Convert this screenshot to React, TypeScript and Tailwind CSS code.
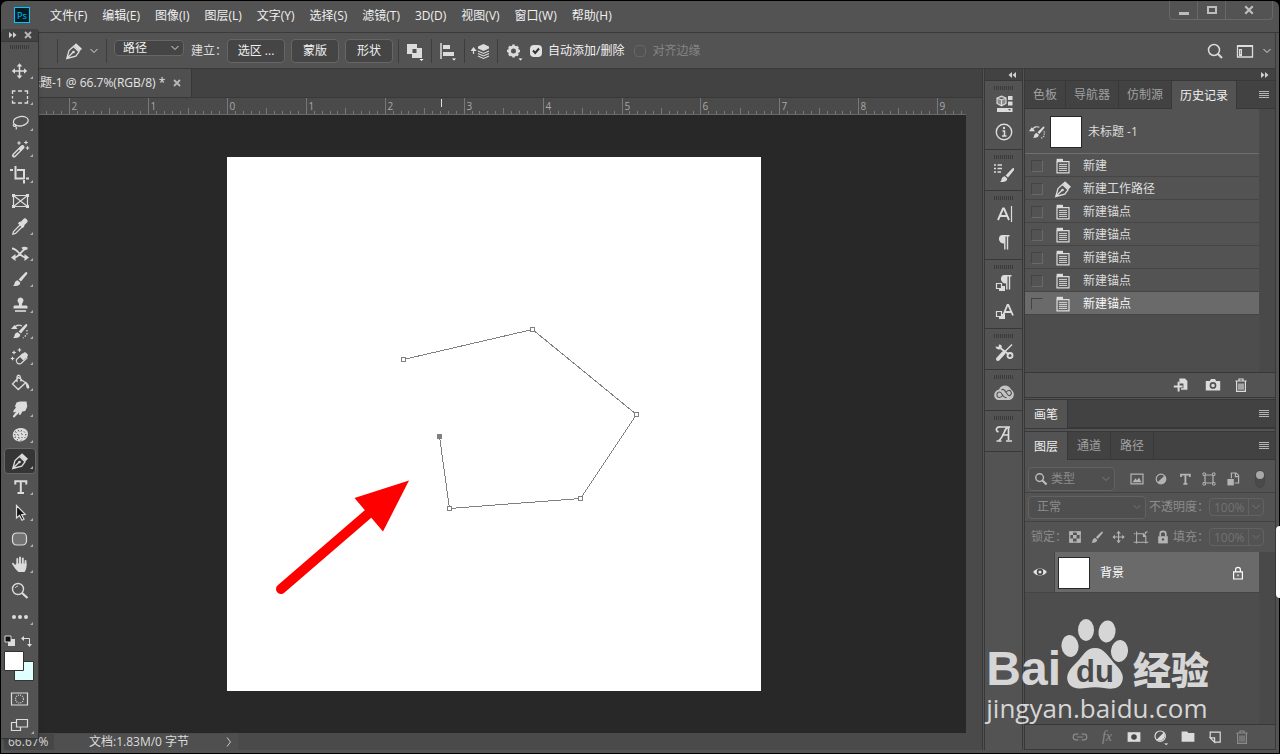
import React, { useState } from "react";
import { clsx } from "clsx";

const menus = [
  "文件(F)",
  "编辑(E)",
  "图像(I)",
  "图层(L)",
  "文字(Y)",
  "选择(S)",
  "滤镜(T)",
  "3D(D)",
  "视图(V)",
  "窗口(W)",
  "帮助(H)",
];

const historyList = [
  { id: 1, name: "新建", icon: "doc" },
  { id: 2, name: "新建工作路径", icon: "pen" },
  { id: 3, name: "新建锚点", icon: "doc" },
  { id: 4, name: "新建锚点", icon: "doc" },
  { id: 5, name: "新建锚点", icon: "doc" },
  { id: 6, name: "新建锚点", icon: "doc" },
  { id: 7, name: "新建锚点", icon: "doc" },
];

const anchors = [
  [176.5, 202.5],
  [305.5, 172.5],
  [409.5, 257.5],
  [353.5, 341.5],
  [222.5, 351.5],
  [212.5, 279.5],
];

type IconProps = { children: React.ReactNode; size?: string };

// 20x20 drawing box shared by all icons
function Icon({ children, size = "size-5" }: IconProps) {
  return (
    <svg
      className={clsx("shrink-0", size)}
      viewBox="0 0 20 20"
      fill="none"
      stroke="currentColor"
      strokeWidth={1.5}
      aria-hidden="true"
    >
      {children}
    </svg>
  );
}

const penShape = (
  <>
    <path d="M2.800 17.500 5 9.500 9.500 5.500l5.500 5.300-3.200 4.400-9 2.300zM3 17.300l6-6" strokeWidth={1.300} />
    <circle cx="9.500" cy="11" r="1.300" fill="currentColor" stroke="none" />
    <path d="M9.500 4.800 12 2.300l6 5.500L15.300 10.500z" fill="currentColor" stroke="none" />
  </>
);

const brushShape = (
  <g fill="currentColor" stroke="none">
    <path d="M16.800 3.200c.8.6.6 1.400.1 2L11 12.600 8.600 10.400 15.300 3.600c.4-.5.9-.8 1.500-.4z" />
    <path d="M7.700 11.200l2.500 2.300c.2 2.600-2.600 4.300-7.400 3.300 1.900-.8 1.400-2 2-3.400.6-1.300 1.700-2.100 2.900-2.200z" />
  </g>
);

const moveShape = (
  <>
    <path d="M9.500 4v12M3.500 10h12" />
    <path
      d="M9.500 2.300 12.300 5.500H6.700zM9.500 17.700l-2.800-3.200h5.600zM1.800 10 5 7.200v5.600zM17.200 10 14 7.200v5.600z"
      fill="currentColor"
      stroke="none"
    />
  </>
);

const sparkle = (x: number, y: number) => (
  <path d={`M${x} ${y - 1.8}v3.600M${x - 1.8} ${y}h3.600`} strokeWidth={1.2} />
);

const tools = [
  { name: "移动工具", art: moveShape },
  {
    name: "矩形选框工具",
    art: <path d="M2.500 7V4h3M8 4h4M14.500 4h3v3M17.500 9v3M17.500 13.500v2.500h-3M12 16H8M5.500 16h-3v-2.500M2.500 11.500V9" strokeWidth={1.3} />,
  },
  {
    name: "套索工具",
    art: (
      <>
        <ellipse cx="10.800" cy="8.200" rx="7.500" ry="4.700" transform="rotate(-10 10.800 8.200)" strokeWidth={1.3} />
        <path d="M3.800 11.200c-1.200 1.200 0 2.600 1.500 2.100 1.300-.6.4-2.200-1.200-1.800M5.600 13c.8 1 1.200 2.400.4 3.500" strokeWidth={1.2} />
      </>
    ),
  },
  {
    name: "魔棒工具",
    art: (
      <>
        <path d="M4 16.500 12.500 8" strokeWidth={4} strokeLinecap="round" />
        <path d="M4 16.500l5.500-5.500" stroke="#535353" strokeWidth={1.2} />
        {sparkle(9, 4)}
        {sparkle(16, 3.500)}
        {sparkle(17.500, 9)}
      </>
    ),
  },
  {
    name: "裁剪工具",
    art: <path d="M0 5h3M5.500 1v12.500h9M7 5h7v9M14 15v3.500M16 13.500h3" strokeWidth={2} />,
  },
  {
    name: "图框工具",
    art: (
      <>
        <path d="M3.500 4.500h14v11h-14zM3.500 4.500l14 11M17.500 4.500l-14 11" strokeWidth={1.200} />
        <path d="M2 3h3v3H2zM16 3h3v3h-3zM2 14h3v3H2zM16 14h3v3h-3z" fill="currentColor" stroke="none" />
      </>
    ),
  },
  {
    name: "吸管工具",
    art: (
      <>
        <path d="M10.500 7.500 3.500 14.500 2.800 17.200 5.500 16.500l7-7" strokeWidth={1.300} />
        <path d="M9 5l2-.5 3-3c1.500-1 4.500 2 3.500 3.600l-3 2.900-.5 2-1.500 1L8 6.500z" fill="currentColor" stroke="none" />
      </>
    ),
  },
  {
    name: "内容感知移动工具",
    art: (
      <>
        <path d="M2 5.500c6 0 8 9 14 9M17.500 5.500c-6 0-8 9-13 9M12 5.500c2-1.500 3-1 5.500 0" strokeWidth={1.800} />
        <path d="M1 14.500l4.500-3.500v7zM19 14.500 14.500 11v7z" fill="currentColor" stroke="none" />
      </>
    ),
  },
  { name: "画笔工具", art: brushShape },
  {
    name: "仿制图章工具",
    art: (
      <g fill="currentColor" stroke="none">
        <path d="M10.500 2.500a3 3 0 0 1 2.200 5c-.8 1-.7 1.700-.7 3h4c1 0 1.500.5 1.500 1.500v1.500h-14V12c0-1 .5-1.500 1.500-1.500h4c0-1.300.1-2-.7-3a3 3 0 0 1 2.200-5z" />
        <path d="M5 15.200h11v1.600H5z" />
      </g>
    ),
  },
  {
    name: "历史记录画笔工具",
    art: (
      <>
        {brushShape}
        <path d="M12 5C9 3.500 6 4 4.500 7" strokeWidth={1.200} />
        <path d="M1 8l3.500-4L7.500 8z" fill="currentColor" stroke="none" />
        <path d="M17 9v4.500l-4 3.500" strokeDasharray="1.500 1.500" strokeWidth={1.200} />
      </>
    ),
  },
  {
    name: "魔术橡皮擦工具",
    art: (
      <>
        <path d="M6.500 12.500 12.500 7l4.500 4-6 5.500c-3 1.500-5.500-1.500-4.500-4z" strokeWidth={1.200} />
        <path d="M9.500 9.500 14 5.500c1.500-.8 4.500 2 3.800 3.500l-4.500 4.500z" fill="currentColor" stroke="none" />
        {sparkle(4, 5.500)}
        {sparkle(9.500, 3)}
        {sparkle(2.500, 11.500)}
      </>
    ),
  },
  {
    name: "油漆桶工具",
    art: (
      <>
        <path d="M8.500 4.500 2.500 11l5.800 5.500L15.500 9.700zM7 9V4.500c0-3 3-3 3.500 0l.5 4" strokeWidth={1.300} />
        <path d="M15 8.500c2.500.5 4.500 4.500 4.300 6-.3 1.500-2.300 1.500-2.700 0z" fill="currentColor" stroke="none" />
      </>
    ),
  },
  {
    name: "涂抹工具",
    art: (
      <path
        d="M6.500 3.500 10 2.500h6.500l.8 5-2 4.500-3 .6-1.500 3-2 .4.500-2.500-5 5c-1.300.2-1.800-1-1-2l3-4-2.300 1c-1-.5-.8-1.800 0-2.500L6 8.500c-1.300-.8-1-1.700-.5-2.500z"
        fill="currentColor"
        stroke="none"
      />
    ),
  },
  {
    name: "海绵工具",
    art: (
      <>
        <path d="M6 4.200c5-2.500 10-1 11.500 2.300 1.500 4-1 8-4 9-4 2-8.500.5-10-2.500-1.500-3.500-.5-7 2.500-8.800z" fill="currentColor" stroke="none" />
        <path
          d="M5 6.500l1.500 1M8 5l1 1.500M11.500 5l-.5 1.500M14 6.500l1 1M4 9.500l1.500.5M7.500 9l1 1.500M11 8.500l1.500 1M15 10l1.500-.5M4.500 12.500l1.500-.5M8 12.500l1.500.5M11.500 12l1 1M14.500 13l.8-1M7 15l1-.5M10.500 15.500l1-.5"
          stroke="#535353"
          strokeWidth={1}
        />
      </>
    ),
  },
  { name: "钢笔工具", art: penShape },
  {
    name: "横排文字工具",
    art: <path d="M5.300 7.500V4.300h11v3.200M10.800 4v12M7.500 16h6.500" strokeWidth={2} />,
  },
  {
    name: "路径选择工具",
    art: <path d="M6.500 2.500v12.500l3-2.500 2.500 4.700 2-1-2.400-4.400 3.600-.5z" fill="#151515" strokeWidth={1.200} />,
  },
  {
    name: "圆角矩形工具",
    art: <rect x="2.500" y="4" width="14" height="12" rx="4" fill="#737373" strokeWidth={1.200} />,
  },
  {
    name: "抓手工具",
    art: (
      <>
        <path d="M7.300 10V4M10 9V2.500M12.800 9V3.500M15.500 10V6M6 13 3 8.800" strokeWidth={1.900} strokeLinecap="round" />
        <path d="M6.300 8.500h10.200c.2 4-.3 6-2 8.500H8.500c-1.500-1-3-3.300-4.300-5.500z" fill="currentColor" stroke="none" />
      </>
    ),
  },
  {
    name: "缩放工具",
    art: (
      <>
        <circle cx="8" cy="8" r="5.500" strokeWidth={1.400} />
        <path d="M5.300 7c.5-1.200 1.500-1.800 2.700-1.800" strokeWidth={1} />
        <path d="M12 12l5.500 5" strokeWidth={2.300} />
      </>
    ),
  },
  {
    name: "编辑工具栏",
    art: (
      <g fill="currentColor" stroke="none">
        <circle cx="4" cy="10" r="2" />
        <circle cx="10" cy="10" r="2" />
        <circle cx="16" cy="10" r="2" />
      </g>
    ),
  },
];

const pilcrow = (
  <>
    <path d="M8.500 3h7v1.400h-1.300V17.500h-1.400V4.400h-1.300V17.500h-1.400v-6c-6.600 0-6.600-8.500-1.600-8.500z" fill="currentColor" stroke="none" />
  </>
);

const twoSquares = (
  <>
    <path d="M5 13h6v5H5z" fill="currentColor" stroke="none" />
    <path d="M2.500 10.500h5v5h-5z" fill="#535353" strokeWidth={1.200} />
  </>
);

const dockGroups = [
  [
    {
      name: "属性库",
      art: (
        <>
          <path d="M7.500 2 12 4v5.500l-4.500 2.300L3 9.500V4zM3 4l4.500 2L12 4M7.500 6v5.800" strokeWidth={1.100} fill="#8a8a8a" />
          <path d="M14 2h4.500v4H14zM14 7.500h4.500v4H14zM3 14h15.500v4H3z" fill="currentColor" stroke="none" />
          <path d="M14 15h3l-1.500 1.700z" fill="#535353" stroke="none" />
        </>
      ),
    },
    {
      name: "信息",
      art: (
        <>
          <circle cx="10" cy="10" r="7.700" strokeWidth={1.400} />
          <path d="M8.500 9h2v5M8 14h4.500" strokeWidth={1.500} />
          <circle cx="10" cy="6" r="1.200" fill="currentColor" stroke="none" />
        </>
      ),
    },
  ],
  [
    {
      name: "画笔设置",
      art: (
        <>
          <path d="M0 2h2M0 5.500h2M0 9h2M3.500 2H8M3.500 5.500H8M3.500 9H7" strokeWidth={1.600} />
          <g transform="translate(3 2)">{brushShape}</g>
        </>
      ),
    },
  ],
  [
    {
      name: "字符",
      art: (
        <>
          <path d="M4 16 9 4.500h1L15 16M5.500 12h8" strokeWidth={1.900} />
          <path d="M17.500 2v16" strokeWidth={1.200} />
        </>
      ),
    },
    { name: "段落", art: pilcrow },
  ],
  [
    {
      name: "段落样式",
      art: (
        <>
          <g transform="translate(2 -1)">{pilcrow}</g>
          {twoSquares}
        </>
      ),
    },
    {
      name: "字符样式",
      art: (
        <>
          <path d="M9 14.500 13.500 4h.8L19 14.500M10.500 11h7" strokeWidth={1.800} />
          {twoSquares}
        </>
      ),
    },
  ],
  [
    {
      name: "工具预设",
      art: (
        <>
          <path d="M5.500 5.500l9.500 7" strokeWidth={1.800} />
          <circle cx="16" cy="13.500" r="2.500" strokeWidth={1.800} />
          <path d="M1.500 4.500l3 .5L5 2.500C8 2.500 8.500 5 7 6.500 5.500 8.500 2 7.500 1.500 4.500z" fill="currentColor" stroke="none" />
          <path d="M18 2.500 9.500 11" strokeWidth={1.500} />
          <path d="M9.500 11 4 17" strokeWidth={4} strokeLinecap="round" />
        </>
      ),
    },
  ],
  [
    {
      name: "库",
      art: (
        <>
          <path
            d="M5 6.500C7 1 15 1 17 6.500c4.500 2.500 3.500 9.500-1.500 10.500H5.500C-1.500 17-1.500 8 5 6.500z"
            fill="#c4c4c4"
            stroke="none"
          />
          <path d="M12.500 14.500c-4 1-4-5.500-7-5.500s-3.800 5.500 0 5.500c1.800 0 2.500-1 3.500-2.500M7.500 7c3-3.500 6 7.500 8.500 5.500 3-2 .5-5.500-1.500-5-1.500.3-2 1-2.500 2" stroke="#535353" strokeWidth={1.100} />
        </>
      ),
    },
  ],
  [
    {
      name: "字形",
      art: (
        <>
          <path d="M4.500 8C.5 6 2.500 2.500 7 3h9M14.500 3v13M13.500 3C10 6 9.500 13 5 16.500M8 11h6.500" strokeWidth={1.700} />
          <path d="M2.500 17h5M12 17h6" strokeWidth={1.500} />
        </>
      ),
    },
  ],
];

function Grip() {
  return (
    <svg className="h-1 w-5" viewBox="0 0 20 4" stroke="#3a3a3a" strokeWidth={1} aria-hidden="true">
      <path d="M.5 0v4M2.500 0v4M4.500 0v4M6.500 0v4M8.500 0v4M10.500 0v4M12.500 0v4M14.500 0v4M16.500 0v4M18.500 0v4" />
    </svg>
  );
}

function Chevron() {
  return (
    <svg className="size-2 shrink-0" viewBox="0 0 8 8" fill="none" stroke="currentColor" aria-hidden="true">
      <path d="M.5 2 4 5.500 7.500 2" strokeWidth={1} />
    </svg>
  );
}

function DoubleArrow({ left = false }: { left?: boolean }) {
  return (
    <svg className="h-2 w-2" viewBox="0 0 8 8" fill="#d0d0d0" aria-hidden="true">
      <path d={left ? "M4 1v6L.5 4zM8 1v6L4.500 4z" : "M0 1v6L3.500 4zM4 1v6L7.500 4z"} />
    </svg>
  );
}

function Cross({ size = "size-2" }: { size?: string }) {
  return (
    <svg className={size} viewBox="0 0 8 8" stroke="currentColor" strokeWidth={1.800} aria-hidden="true">
      <path d="M1 1l6 6M7 1 1 7" />
    </svg>
  );
}

function MenuLines() {
  return (
    <button aria-label="面板菜单" className="ml-auto mr-1.5 text-[#b4b4b4]">
      <svg className="h-2 w-2.5" viewBox="0 0 10 8" stroke="currentColor" aria-hidden="true">
        <path d="M0 .5h10M0 2.500h10M0 4.500h10M0 6.500h10" />
      </svg>
    </button>
  );
}

function Divider() {
  return <span className="h-6 w-px shrink-0 bg-[#3d3d3d]" />;
}

type SelectBoxProps = {
  label: string;
  value: string;
  className?: string;
  selectClass?: string;
};

function SelectBox({ label, value, className, selectClass }: SelectBoxProps) {
  return (
    <label className={clsx("relative flex items-center rounded-sm border", className)}>
      <select
        aria-label={label}
        className={clsx("h-full w-full appearance-none bg-transparent outline-none", selectClass)}
      >
        <option>{value}</option>
      </select>
      <span className="pointer-events-none absolute right-1">
        <Chevron />
      </span>
    </label>
  );
}

function PercentBox({ label }: { label: string }) {
  const [value, setValue] = useState("100%");

  return (
    <label className="ml-auto mr-[11px] flex items-center">
      <span className="whitespace-nowrap text-[#8c8c8c]">{label}：</span>
      <span className="flex h-[18px] items-center rounded-sm border border-[#626262]">
        <input
          className="h-full w-[38px] bg-transparent pl-1 text-[#727272] outline-none"
          value={value}
          onChange={(e) => setValue(e.target.value)}
        />
        <span className="flex h-full w-[15px] items-center justify-center border-l border-[#626262] text-[#727272]">
          <Chevron />
        </span>
      </span>
    </label>
  );
}

type TabsProps = { items: string[]; active: string; wide?: boolean };

function PanelTabs({ items, active, wide = false }: TabsProps) {
  return (
    <div className="flex h-7 shrink-0 items-stretch bg-[#424242]">
      {items.map((item) => (
        <button
          key={item}
          className={clsx(
            "border-r border-[#383838] pt-px",
            wide ? "px-[9px]" : "px-2",
            item === active
              ? "bg-[#535353] text-[#f0f0f0]"
              : "border-b text-[#a0a0a0]",
          )}
        >
          {item}
        </button>
      ))}
      <div className="flex flex-1 items-center border-b border-[#383838]">
        <MenuLines />
      </div>
    </div>
  );
}

function MenuBar() {
  return (
    <header className="flex h-8 shrink-0 items-start border-b border-[#3a3a3a] pl-[13px]">
      <svg className="mt-1.5 h-4 w-4" viewBox="0 0 16 16" aria-hidden="true">
        <rect x=".5" y=".5" width="15" height="15" fill="#001d26" stroke="#00c8ff" />
        <text x="3" y="11.500" fontSize="9" fill="#00c8ff" fontFamily="Open Sans, sans-serif">
          Ps
        </text>
      </svg>
      <nav className="ml-5 mt-[7px] flex gap-[15px] text-xs leading-4 text-[#f0f0f0]">
        {menus.map((menu) => (
          <button key={menu} className="whitespace-nowrap">
            {menu}
          </button>
        ))}
      </nav>
      <div className="ml-auto mr-1.5 flex h-[19px] rounded-b-sm border border-t-0 border-[#686868] text-[#bdbdbd]">
        <button aria-label="最小化" className="flex w-7 items-center justify-center border-r border-[#686868]">
          <span className="mt-1.5 h-[3px] w-2.5 bg-[#bdbdbd]" />
        </button>
        <button aria-label="最大化" className="flex w-7 items-center justify-center border-r border-[#686868]">
          <span className="h-2 w-2.5 border-2 border-[#bdbdbd]" />
        </button>
        <button aria-label="关闭" className="flex w-[46px] items-center justify-center">
          <Cross size="size-2.5" />
        </button>
      </div>
    </header>
  );
}

function OptionsBar() {
  const [autoAdd, setAutoAdd] = useState(true);

  return (
    <div className="mx-[3px] flex h-9 shrink-0 items-center border-b border-r border-[#3a3a3a] pl-[53px] text-xs text-[#dcdcdc]">
      <Divider />
      <button aria-label="工具预设选取器" className="ml-1.5 flex items-center gap-1.5">
        <Icon>{penShape}</Icon>
        <Chevron />
      </button>
      <span className="w-2" />
      <Divider />
      <SelectBox
        label="工具模式"
        value="路径"
        className="mx-[7px] -mt-1.5 h-4 w-[70px] border-[#666] bg-[#454545]"
        selectClass="pl-2 leading-3 text-[#f0f0f0]"
      />
      <span className="-ml-1 mr-1">
        <Divider />
      </span>
      <span className="w-9 whitespace-nowrap">建立：</span>
      <div className="flex gap-1.5">
        <button className="h-6 w-[58px] rounded-sm border border-[#666] bg-[#454545] text-[#f0f0f0]">
          选区 ...
        </button>
        <button className="h-6 w-12 rounded-sm border border-[#666] bg-[#454545] text-[#f0f0f0]">蒙版</button>
        <button className="h-6 w-12 rounded-sm border border-[#666] bg-[#454545] text-[#f0f0f0]">形状</button>
      </div>
      <span className="w-[5px]" />
      <Divider />
      <button aria-label="路径操作" className="px-1.5">
        <Icon>
          <path d="M2 3h10v4h5v10H7v-4H2z" fill="currentColor" stroke="none" />
          <path d="M7.500 8h4v4h-4z" fill="#535353" stroke="none" />
          <path d="M14.500 18h4l-2 2z" fill="#fff" stroke="none" />
        </Icon>
      </button>
      <Divider />
      <button aria-label="路径对齐方式" className="px-1.5">
        <Icon>
          <path d="M3 2v16" />
          <path d="M5 4h7v4H5zM5 11h11v4H5z" fill="currentColor" stroke="none" />
          <path d="M14 17.500h4l-2 2z" fill="#fff" stroke="none" />
        </Icon>
      </button>
      <Divider />
      <button aria-label="路径排列方式" className="px-1.5">
        <Icon>
          <path d="M2.500 13V8M.5 9.500l2-2.500 2 2.500z" strokeWidth={1.200} fill="currentColor" />
          <path d="M7 5.500 12.500 3 18 5.500v2L12.500 10 7 7.500z" fill="currentColor" stroke="none" />
          <path d="M7 10l5.500 2.500L18 10M7 12.500l5.500 2.500 5.500-2.500M7 15l5.500 2.500L18 15" strokeWidth={1.100} />
        </Icon>
      </button>
      <Divider />
      <button aria-label="设置" className="px-1.5">
        <Icon>
          <circle cx="9.500" cy="10" r="4" strokeWidth={3} />
          <path d="M9.500 3.500v2M9.500 14.500v2M3 10h2M14 10h2M5 5.500l1.400 1.400M14 5.500l-1.400 1.400M5 14.500l1.400-1.400M14 14.500l-1.400-1.400" strokeWidth={2.500} />
          <path d="M14.500 17.500h4l-2 2z" fill="#fff" stroke="none" />
        </Icon>
      </button>
      <label className="flex items-center gap-1.5 whitespace-nowrap text-[#f0f0f0]">
        <span className="relative flex">
          <input
            type="checkbox"
            checked={autoAdd}
            onChange={(e) => setAutoAdd(e.target.checked)}
            className="size-3 appearance-none rounded-sm bg-[#e0e0e0]"
          />
          {autoAdd && (
            <svg className="pointer-events-none absolute inset-0 size-3" viewBox="0 0 12 12" fill="none" stroke="#333" strokeWidth={2} aria-hidden="true">
              <path d="M3 5.500 5.200 8 9 3.500" />
            </svg>
          )}
        </span>
        自动添加/删除
      </label>
      <label className="ml-2.5 flex items-center gap-1.5 whitespace-nowrap text-[#858585]">
        <input
          type="checkbox"
          disabled
          className="size-3 appearance-none rounded-sm border border-[#666]"
        />
        对齐边缘
      </label>
      <div className="ml-auto mr-1 flex items-center gap-2.5">
        <button aria-label="搜索">
          <Icon>
            <circle cx="9" cy="9" r="5.500" />
            <path d="M13 13l4 4" strokeWidth={2} />
          </Icon>
        </button>
        <button aria-label="选择工作区" className="flex items-center gap-2">
          <Icon>
            <path d="M2.500 5h15v11h-15z" strokeWidth={1.300} />
            <path d="M2 4h16v2H2zM4 8h3v7H4z" fill="currentColor" stroke="none" />
            <path d="M5 10h1M5 12h1" stroke="#535353" strokeWidth={1} />
          </Icon>
          <Chevron />
        </button>
      </div>
    </div>
  );
}

// Ticks are counted from the left edge of the page, which sits in the middle of the view
function Ruler() {
  const ticks = Array.from({ length: 120 }, (_, i) => i - 26);
  const step = 7.89;

  return (
    <svg className="block h-[17px] w-full border-b border-[#686868]" stroke="#777" aria-hidden="true">
      <svg x="50%" className="overflow-visible">
        {ticks.map((i) => {
          const x = Math.round(i * step) - 266.5;
          const top = i % 10 === 0 ? 0 : i % 5 === 0 ? 10 : 13;
          return (
            <g key={i}>
              <path d={`M${x} ${top}V16`} />
              {i % 10 === 0 && (
                <text x={x + 2} y={12} fontSize={10} fill="#a8a8a8" stroke="none">
                  {Math.abs(i / 10)}
                </text>
              )}
            </g>
          );
        })}
        <path d="M-52.500 1v8" stroke="#e0e0e0" />
      </svg>
    </svg>
  );
}

function DocumentArea() {
  return (
    <main className="flex min-w-0 flex-1 flex-col border-r border-[#383838]">
      <div className="flex h-[29px] shrink-0 border-b border-[#383838] bg-[#424242] text-xs">
        <div className="flex items-center gap-2 whitespace-nowrap border-r border-[#383838] bg-[#4f4f4f] pl-3 pr-2.5 text-[#e4e4e4]">
          未标题-1 @ 66.7%(RGB/8) *
          <button aria-label="关闭文档" className="text-[#b8b8b8]">
            <Cross />
          </button>
        </div>
      </div>
      <div className="flex min-h-0 flex-1">
        <div className="w-[18px] shrink-0 bg-[#4a4a4a]" />
        <div className="flex min-w-0 flex-1 flex-col overflow-hidden bg-[#4a4a4a]">
          <Ruler />
          <div className="flex min-h-0 flex-1 items-center justify-center overflow-hidden bg-[#282828]">
            <svg className="size-[534px] shrink-0 bg-white" viewBox="0 0 534 534" fill="none">
              <polyline
                points={anchors.map((p) => p.join(",")).join(" ")}
                stroke="#808080"
                shapeRendering="crispEdges"
              />
              {anchors.map(([x, y], i) => (
                <rect
                  key={i}
                  x={x - 2}
                  y={y - 2}
                  width={4}
                  height={4}
                  fill={i === anchors.length - 1 ? "#808080" : "#fff"}
                  stroke="#808080"
                />
              ))}
              <path d="M54 432 141 357" stroke="#f00" strokeWidth={10} strokeLinecap="round" />
              <path d="M182 323.500 127.500 341 156 374.500z" fill="#f00" />
            </svg>
          </div>
        </div>
        <div className="w-4 shrink-0 bg-[#4a4a4a]" />
      </div>
      <footer className="flex h-[17px] shrink-0 items-center bg-[#4a4a4a] text-xs leading-4 text-[#dcdcdc]">
        <input
          aria-label="缩放比例"
          defaultValue="66.67%"
          className="h-4 w-[50px] bg-[#464646] pl-1 text-xs outline-none"
        />
        <span className="w-[172px] bg-[#4f4f4f] pl-[35px]">文档:1.83M/0 字节</span>
        <button aria-label="状态栏选项" className="flex h-full w-3 items-center bg-[#4f4f4f]">
          <svg className="h-2.5 w-1.5" viewBox="0 0 6 10" fill="none" stroke="#ccc" aria-hidden="true">
            <path d="M1 .5 4.500 5 1 9.500" />
          </svg>
        </button>
      </footer>
    </main>
  );
}

function Toolbox() {
  return (
    <aside className="absolute left-px top-[29px] flex w-[38px] flex-col items-center rounded-t border-r border-b border-[#333] bg-[#535353] text-[#dcdcdc] shadow-md">
      <div className="flex h-[13px] w-full items-center justify-between rounded-t border-b border-[#383838] bg-[#424242] px-2">
        <DoubleArrow />
        <button aria-label="关闭工具栏" className="-mr-0.5 text-[#b8b8b8]">
          <Cross />
        </button>
      </div>
      <div className="flex h-4 items-start pt-[3px]">
        <Grip />
      </div>
      {tools.map((tool) => (
        <button
          key={tool.name}
          aria-label={tool.name}
          className={clsx(
            "relative flex h-[26px] w-8 items-center justify-center rounded-sm border",
            tool.name === "钢笔工具" ? "border-[#666] bg-[#353535]" : "border-transparent",
          )}
        >
          <Icon>{tool.art}</Icon>
          {tool.name !== "图框工具" && tool.name !== "缩放工具" ? (
            <svg className="absolute bottom-1 right-0.5 size-[3px]" viewBox="0 0 3 3" fill="#b0b0b0" aria-hidden="true">
              <path d="M3 0v3H0z" />
            </svg>
          ) : null}
        </button>
      ))}
      <div className="flex h-[21px] w-full items-center justify-between px-[3px] pt-px">
        <svg className="size-3" viewBox="0 0 12 12" aria-hidden="true">
          <path d="M4 4h7v7H4z" fill="#dcdcdc" />
          <path d="M1 1h6v6H1z" fill="#111" stroke="#dcdcdc" />
        </svg>
        <svg className="mr-0.5 size-3" viewBox="0 0 12 12" fill="none" stroke="#dcdcdc" aria-hidden="true">
          <path d="M3 3.500h5.500V9" />
          <path d="M0 3.500 3 1v5zM8.500 12 6 9h5z" fill="#dcdcdc" stroke="none" />
        </svg>
      </div>
      {/* Foreground / background colors */}
      <svg className="ml-[3px] h-[30px] w-[30px] self-start" viewBox="0 0 30 30" stroke="#333" aria-hidden="true">
        <path d="M10.500 10.500h19v19h-19z" fill="#e0ffff" />
        <path d="M.5.500h19v19H.5z" fill="#fff" />
      </svg>
      <button aria-label="以快速蒙版模式编辑" className="mt-1 flex h-[27px] items-center">
        <Icon>
          <path d="M1.500 4h16v12h-16z" strokeWidth={1.200} />
          <circle cx="9.500" cy="10" r="4" strokeDasharray="1 1.100" strokeWidth={1.200} />
        </Icon>
      </button>
      <button aria-label="更改屏幕模式" className="relative flex h-[26px] w-8 items-center justify-center">
        <Icon>
          <path d="M1.500 7.500h9v8h-9z" strokeWidth={1.200} />
          <path d="M6.500 4.500h11v7.500h-11z" fill="#535353" strokeWidth={1.200} />
        </Icon>
        <svg className="absolute bottom-1 right-0.5 size-[3px]" viewBox="0 0 3 3" fill="#b0b0b0" aria-hidden="true">
          <path d="M3 0v3H0z" />
        </svg>
      </button>
    </aside>
  );
}

function Dock() {
  return (
    <aside className="mx-px flex w-[39px] shrink-0 flex-col border-x border-[#383838] text-[#dcdcdc]">
      <div className="flex h-3 shrink-0 items-center justify-end border-b border-[#383838] bg-[#424242] pr-1.5">
        <DoubleArrow left />
      </div>
      {dockGroups.map((group, i) => (
        <div key={i} className="flex flex-col items-center border-b border-[#383838] pb-[3px]">
          <div className="flex h-[9px] items-end">
            <Grip />
          </div>
          {group.map((item) => (
            <button key={item.name} aria-label={item.name} className="flex h-7 items-center">
              <Icon>{item.art}</Icon>
            </button>
          ))}
        </div>
      ))}
    </aside>
  );
}

function DocIcon() {
  return (
    <Icon size="size-4">
      <path d="M2 1h8v3H2z" fill="currentColor" stroke="none" />
      <path d="M2.500 4.500h15v14h-15z" strokeWidth={1.500} />
      <path d="M5 8h10M5 10.500h10M5 13h10M5 15.500h10" strokeWidth={1.200} />
    </Icon>
  );
}

const trashShape = (
  <path d="M3 5h14M7.500 4.500V2.500h5v2M4.500 5.500V18h11V5.500M7.500 8v8M10 8v8M12.500 8v8" strokeWidth={1.500} />
);

function HistoryPanel() {
  const [current, setCurrent] = useState(7);

  return (
    <section className="flex flex-col border-b border-[#383838]">
      <PanelTabs items={["色板", "导航器", "仿制源", "历史记录"]} active="历史记录" />
      <div className="flex h-[264px] border-b border-[#383838] bg-[#4d4d4d]">
        <div className="flex-1">
          <div className="flex h-[45px] items-center border-b border-[#6e6e6e] bg-[#535353] pl-1 pt-0.5 text-[#dcdcdc]">
            <Icon size="size-4">
              <g transform="translate(2 0)">{brushShape}</g>
              <path d="M13 4C9 2.500 5 4 4 8" />
              <path d="M0 9l3.500-5 4 5z" fill="currentColor" stroke="none" />
              <path d="M19 9v6l-4 3" strokeDasharray="1.500 1.500" />
            </Icon>
            <span className="ml-[5px] size-8 border border-[#282828] bg-white" />
            <span className="ml-1.5">未标题 -1</span>
          </div>
          {historyList.map((state) => (
            <button
              key={state.id}
              onClick={() => setCurrent(state.id)}
              className={clsx(
                "flex h-[23px] w-full items-center border-b border-[#454545] pl-1.5 pt-0.5",
                state.id === current ? "bg-[#6a6a6a] text-[#f8f8f8]" : "bg-[#535353] text-[#dcdcdc]",
              )}
            >
              <span className="size-3 border border-[#444] border-b-[#696969] border-r-[#696969]" />
              <span className="ml-2.5 mr-2.5 flex w-5 justify-center text-[#dcdcdc]">
                {state.icon === "pen" ? <Icon>{penShape}</Icon> : <DocIcon />}
              </span>
              {state.name}
            </button>
          ))}
        </div>
        <div className="w-4 bg-[#494949]" />
      </div>
      <div className="flex h-6 items-center justify-end gap-4 pr-[26px] text-[#dcdcdc]">
        <button aria-label="从当前状态创建新文档">
          <Icon size="size-4">
            <path d="M8 2h7l3 3v11h-8v-2h3V8H8z" fill="currentColor" stroke="none" />
            <path d="M7 6v12M1 12h11" strokeWidth={2.500} />
          </Icon>
        </button>
        <button aria-label="创建新快照">
          <Icon size="size-4">
            <path d="M1 5h5l1.500-2.500h5L14 5h5v12H1z" fill="currentColor" stroke="none" />
            <circle cx="10" cy="10.500" r="3.200" stroke="#535353" strokeWidth={2} />
          </Icon>
        </button>
        <button aria-label="删除当前状态" className="-ml-1">
          <Icon size="size-4">{trashShape}</Icon>
        </button>
      </div>
    </section>
  );
}

function LayersPanel() {
  return (
    <section className="mt-0.5 flex min-h-0 flex-1 flex-col border-y border-[#383838]">
      <PanelTabs items={["图层", "通道", "路径"]} active="图层" wide />
      <div className="flex h-[33px] shrink-0 items-center border-b border-[#424242] pl-[3px] pr-2.5 pt-1.5 text-[#a8a8a8]">
        <div className="relative flex items-center">
          <SelectBox
            label="图层过滤类型"
            value="类型"
            className="h-6 w-[87px] border-[#626262] bg-[#4f4f4f] text-[#7c7c7c]"
            selectClass="pl-[22px] text-[#8c8c8c]"
          />
          <span className="pointer-events-none absolute left-1.5 text-[#bdbdbd]">
            <svg className="size-3.5" viewBox="0 0 20 20" fill="none" stroke="currentColor" aria-hidden="true">
              <circle cx="8" cy="8" r="5.500" strokeWidth={2} />
              <path d="M12 12l6 6" strokeWidth={3} />
            </svg>
          </span>
        </div>
        <div className="ml-3.5 flex items-center gap-2 text-[#b4b4b4]">
          <button aria-label="像素图层滤镜">
            <Icon size="size-4">
              <path d="M2.500 4h15v12h-15z" />
              <path d="M4.500 14 8 9l2 2.500L12.500 8l3 6z" fill="currentColor" stroke="none" />
            </Icon>
          </button>
          <button aria-label="调整图层滤镜">
            <Icon size="size-4">
              <circle cx="10" cy="10" r="6" />
              <path d="M14.500 5.500A6.300 6.300 0 0 1 5.500 14.500z" fill="currentColor" stroke="none" />
            </Icon>
          </button>
          <button aria-label="文字图层滤镜">
            <Icon size="size-4">
              <path d="M5 7.500V4.500h11v3M10.500 4.500V16M8 16h5" strokeWidth={2.300} />
            </Icon>
          </button>
          <button aria-label="形状图层滤镜">
            <Icon size="size-4">
              <path d="M5 5h10v10H5z" />
              <path d="M2.500 2.500h3v3h-3zM14.500 2.500h3v3h-3zM2.500 14.500h3v3h-3zM14.500 14.500h3v3h-3z" strokeWidth={1.200} fill="#535353" />
            </Icon>
          </button>
          <button aria-label="智能对象滤镜">
            <Icon size="size-4">
              <path d="M8 9V2.500h6l3 3V15h-5M13 2.500V7h4" />
              <path d="M3 10h8v8H3z" fill="currentColor" stroke="none" />
            </Icon>
          </button>
        </div>
        <button aria-label="图层过滤开关" className="ml-auto flex h-[18px] w-2.5 items-start rounded-full border border-[#474747] bg-[#4a4a4a]">
          <span className="block size-2 rounded-full bg-[#a8a8a8]" />
        </button>
      </div>
      <div className="flex h-[29px] shrink-0 items-center border-b border-[#424242] pl-[3px]">
        <SelectBox
          label="混合模式"
          value="正常"
          className="h-[23px] w-[118px] border-[#626262] bg-[#4f4f4f] text-[#727272]"
          selectClass="pl-2 text-[#8c8c8c]"
        />
        <PercentBox label="不透明度" />
      </div>
      <div className="flex h-[30px] shrink-0 items-center pl-1.5 text-[#8c8c8c]">
        <span className="w-9 whitespace-nowrap">锁定：</span>
        <div className="flex gap-1.5 text-[#b4b4b4]">
          <button aria-label="锁定透明像素">
            <Icon size="size-4">
              <path d="M3.500 3.500h13v13h-13z" />
              <path d="M3 3h4.500v4.500H3zM12 3h5v4.500h-4.500zM7.500 7.500H12V12H7.500zM3 12h4.500v5H3zM12 12h5v5h-5z" fill="currentColor" stroke="none" />
            </Icon>
          </button>
          <button aria-label="锁定图像像素">
            <Icon size="size-4">{brushShape}</Icon>
          </button>
          <button aria-label="锁定位置">
            <Icon size="size-4">{moveShape}</Icon>
          </button>
          <button aria-label="防止在画板内外自动嵌套">
            <Icon size="size-4">
              <path d="M4.500 3v15M1 6h2M4.500 6h8.500l3 3v9M1 16.500h18M13 6v3.500h3M15.500 3.500v3M18 3l-1.500 1.500" strokeWidth={1.300} />
            </Icon>
          </button>
          <button aria-label="锁定全部">
            <Icon size="size-4">
              <path d="M4 9h12v9H4z" fill="currentColor" stroke="none" />
              <path d="M6.500 9V6c0-4 7-4 7 0v3" strokeWidth={2} />
              <circle cx="10" cy="13" r="1.500" fill="#535353" stroke="none" />
            </Icon>
          </button>
        </div>
        <PercentBox label="填充" />
      </div>
      <div className="flex min-h-0 flex-1 border-b border-[#383838] bg-[#4d4d4d]">
        <div className="flex-1">
          <div className="flex h-[41px] border-b border-[#454545] bg-[#535353]">
            <button aria-label="指示图层可见性" className="flex w-[30px] items-center justify-center border-r border-[#454545] text-[#e4e4e4]">
              <Icon size="size-4">
                <path d="M1.500 10C5 4 15 4 18.500 10 15 16 5 16 1.500 10z" fill="currentColor" stroke="none" />
                <circle cx="10" cy="10" r="3" stroke="#454545" strokeWidth={2} />
              </Icon>
            </button>
            <div className="flex flex-1 items-center bg-[#6a6a6a] pl-[3px] pr-[13px] pt-px text-white">
              <span className="size-8 border border-[#282828] bg-white" />
              <span className="ml-2.5">背景</span>
              <span className="ml-auto">
                <Icon size="size-4">
                  <path d="M4.500 8.500h11v9h-11z" />
                  <path d="M7 8.500V6c0-4 6-4 6 0v2.500M10 12v2" />
                </Icon>
              </span>
            </div>
          </div>
        </div>
        <div className="w-4 bg-[#494949]" />
      </div>
      <div className="flex h-6 shrink-0 items-center justify-end gap-[11px] pr-[25px] text-[#dcdcdc]">
        <button aria-label="链接图层" className="text-[#8c8c8c]">
          <Icon size="size-4">
            <path d="M8 6.500H5a3.500 3.500 0 0 0 0 7h3M12 6.500h3a3.500 3.500 0 0 1 0 7h-3M6 10h8" />
          </Icon>
        </button>
        <button aria-label="添加图层样式" className="w-4 font-[Liberation_Serif] text-sm italic text-[#8c8c8c]">
          fx
        </button>
        <button aria-label="添加图层蒙版">
          <Icon size="size-4">
            <path d="M2 4h16v12H2z" fill="currentColor" stroke="none" />
            <circle cx="10" cy="10" r="3.500" fill="#454545" stroke="none" />
          </Icon>
        </button>
        <button aria-label="创建新的填充或调整图层">
          <Icon size="size-4">
            <circle cx="9" cy="9" r="6.500" />
            <path d="M13.500 4.500A6.500 6.500 0 0 1 4.500 13.500z" fill="currentColor" stroke="none" />
            <path d="M14 18h5l-2.500 2z" fill="#fff" stroke="none" />
          </Icon>
        </button>
        <button aria-label="创建新组">
          <Icon size="size-4">
            <path d="M2 3h7l1.500 2H18v11H2z" fill="currentColor" stroke="none" />
          </Icon>
        </button>
        <button aria-label="创建新图层">
          <Icon size="size-4">
            <path d="M4 11V4h12.500v12.500H10" />
            <path d="M4 11h5.500v5.500z" strokeWidth={1.500} />
          </Icon>
        </button>
        <button aria-label="删除图层" className="text-[#8c8c8c]">
          <Icon size="size-4">{trashShape}</Icon>
        </button>
      </div>
    </section>
  );
}

function Panels() {
  return (
    <aside className="flex w-[252px] shrink-0 flex-col border-x border-[#383838] text-xs">
      <div className="flex h-3 shrink-0 items-center justify-end border-b border-[#383838] bg-[#424242] pr-1.5">
        <DoubleArrow />
      </div>
      <HistoryPanel />
      <section className="mt-px border-y border-[#383838]">
        <PanelTabs items={["画笔"]} active="画笔" wide />
      </section>
      <LayersPanel />
    </aside>
  );
}

function Watermark() {
  return (
    <div className="pointer-events-none absolute bottom-[30px] right-[71px] flex flex-col text-[#d6d6d6]">
      <div className="flex items-end">
        <span className="font-[Liberation_Sans] text-5xl leading-[46px] font-bold">Bai</span>
        <svg className="h-[74px] w-[68px]" viewBox="0 0 68 74" fill="currentColor" aria-hidden="true">
          <ellipse cx="9" cy="28" rx="8.500" ry="11" transform="rotate(-6 9 28)" />
          <ellipse cx="25" cy="12" rx="8" ry="11" />
          <ellipse cx="46" cy="13.500" rx="8.500" ry="11" transform="rotate(8 46 13.500)" />
          <ellipse cx="58.500" cy="33" rx="8.500" ry="11" transform="rotate(6 58.500 33)" />
          <path d="M34 30c9 0 13 8 19 15 6 6 11 12 8 19-3 8-12 7-18 6-6-1-12-1-18 0-6 1-15 1-18-6-3-8 3-14 9-20 6-6 9-14 18-14z" />
          <text x="15" y="64" fontSize="31" fontWeight="700" fill="#4a4a4a" fontFamily="Liberation Sans, sans-serif">
            du
          </text>
        </svg>
        <span className="ml-1 text-[38px] leading-[46px] font-black">经验</span>
      </div>
      <span className="font-[Open_Sans] text-[26px] leading-8 font-medium">jingyan.baidu.com</span>
    </div>
  );
}

export default function App() {
  return (
    <div className="relative flex h-screen flex-col overflow-hidden bg-black p-px font-['Open_Sans','Noto_Sans_CJK_SC',sans-serif]">
      <div className="flex min-h-0 flex-1 flex-col rounded-t-md bg-[#535353]">
        <MenuBar />
        <OptionsBar />
        <div className="mx-[3px] mb-[3px] flex min-h-0 flex-1">
          <DocumentArea />
          <Dock />
          <Panels />
        </div>
      </div>
      <Toolbox />
      <Watermark />
      {/* Side handle of the desktop widget */}
      <div className="absolute right-0 top-[526px] h-[72px] w-1 rounded-l-sm bg-white" />
    </div>
  );
}
